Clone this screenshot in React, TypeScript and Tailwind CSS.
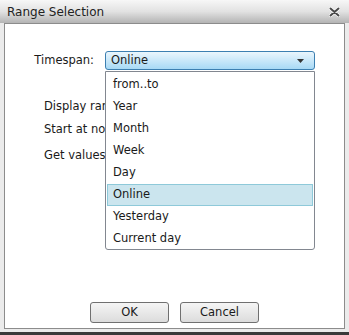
const options = ["from..to", "Year", "Month", "Week", "Day", "Online", "Yesterday", "Current day"];

export default function App() {
  const selected = "Online";

  return (
    <div
      className="relative w-[349px] h-[335px] overflow-hidden bg-[#ebebeb] flex flex-col text-[11.5px] text-[#1a1a1a]"
      style={{ fontFamily: "Tahoma, 'DejaVu Sans', sans-serif" }}
    >
      {/* title bar */}
      <div className="h-[23px] shrink-0 flex items-center justify-between pl-[7px] pr-[9px] bg-gradient-to-b from-[#f7f7f7] via-[#e2e2e2] to-[#b4b4b4]">
        <span className="text-[12px] text-[#222]">Range Selection</span>
        <svg width="11" height="10" viewBox="0 0 11 10">
          <path d="M1.5 1.5 L9.5 8.5 M9.5 1.5 L1.5 8.5" stroke="#fff" strokeWidth="3.4" strokeLinecap="round" />
          <path d="M1.5 1.5 L9.5 8.5 M9.5 1.5 L1.5 8.5" stroke="#4a4a4a" strokeWidth="2" strokeLinecap="round" />
        </svg>
      </div>

      {/* body */}
      <div className="mx-[4px] h-[306px] shrink-0 bg-white border border-[#8c8c8c] flex flex-col">
        <div className="pt-[27px] flex items-center">
          <span className="w-[89px] text-right">Timespan:</span>
          <div className="ml-[11px] w-[210px] h-[19px] rounded-[3px] border border-[#3c7fb1] bg-gradient-to-b from-[#eaf6fd] to-[#a7d9f5] flex items-center justify-between pl-[5px] pr-[10px]">
            <span>{selected}</span>
            <svg width="7" height="4" viewBox="0 0 7 4">
              <path d="M0 0 H7 L3.5 4 Z" fill="#333" />
            </svg>
          </div>
        </div>

        {/* rows partly hidden under the open list */}
        <div className="pl-[39px] flex flex-col">
          <span className="mt-[28px] w-[61px] overflow-hidden whitespace-nowrap">Display range</span>
          <span className="mt-[6px] w-[61px] overflow-hidden whitespace-nowrap">Start at now</span>
          <span className="mt-[8px] w-[61px] overflow-hidden whitespace-nowrap">Get values</span>
        </div>

        <div className="mt-auto pb-[5px] flex justify-center gap-[11px]">
          <button className="w-[79px] h-[21px] rounded-[3px] border border-[#707070] bg-gradient-to-b from-[#f5f5f5] to-[#dcdcdc]">OK</button>
          <button className="w-[79px] h-[21px] rounded-[3px] border border-[#707070] bg-gradient-to-b from-[#f5f5f5] to-[#dcdcdc]">Cancel</button>
        </div>
      </div>

      <div className="h-[3px] shrink-0" />
      <div className="flex-1 bg-[#3a3a3a]" />

      {/* open dropdown list */}
      <div className="absolute left-[105px] top-[71px] w-[210px] h-[179px] bg-white border border-[#828790] rounded-b-[3px] pt-[2px] px-[1px]">
        {options.map((o) => (
          <div
            key={o}
            className={`h-[22px] flex items-center pl-[5px] border ${
              o === selected ? "bg-[#cbe5ee] border-[#8ec9d9]" : "border-transparent"
            }`}
          >
            {o}
          </div>
        ))}
      </div>
    </div>
  );
}
